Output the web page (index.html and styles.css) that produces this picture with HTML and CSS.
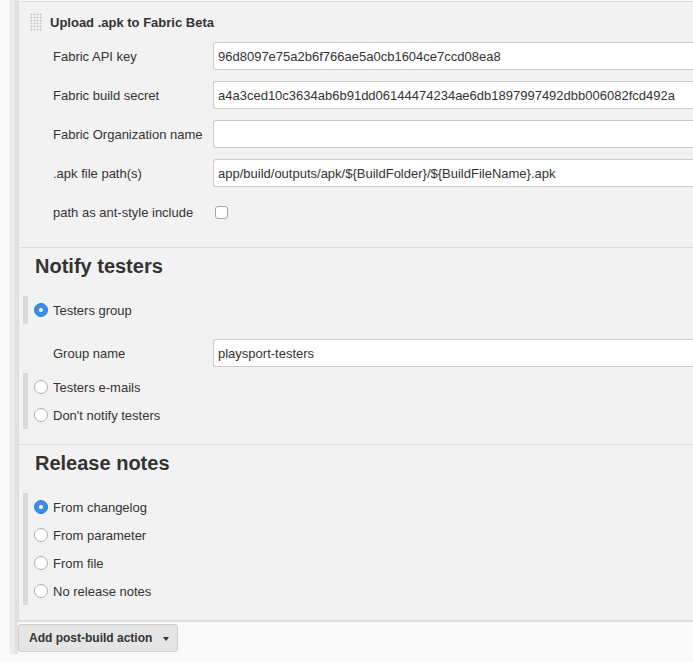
FILE: index.html
```html
<!DOCTYPE html>
<html>
<head>
<meta charset="utf-8">
<link rel="stylesheet" href="styles.css">
</head>
<body>
<div class="page">
  <div class="rail"></div>
  <div class="main">
    <div class="panel">
      <div class="hdr"><span class="handle"></span><span class="hdr-title">Upload .apk to Fabric Beta</span></div>
      <div class="rows">
        <div class="row"><span class="lbl">Fabric API key</span><input class="inp" type="text" value="96d8097e75a2b6f766ae5a0cb1604ce7ccd08ea8"></div>
        <div class="row"><span class="lbl">Fabric build secret</span><input class="inp" type="text" value="a4a3ced10c3634ab6b91dd06144474234ae6db1897997492dbb006082fcd492a"></div>
        <div class="row"><span class="lbl">Fabric Organization name</span><input class="inp" type="text" value=""></div>
        <div class="row"><span class="lbl">.apk file path(s)</span><input class="inp" type="text" value="app/build/outputs/apk/${BuildFolder}/${BuildFileName}.apk"></div>
        <div class="row"><span class="lbl">path as ant-style include</span><span class="cb"></span></div>
      </div>
      <div class="section">
        <div class="h2">Notify testers</div>
        <div class="radios first">
          <div class="radio"><span class="rb on"></span>Testers group</div>
        </div>
        <div class="row group"><span class="lbl">Group name</span><input class="inp" type="text" value="playsport-testers"></div>
        <div class="radios second">
          <div class="radio"><span class="rb"></span>Testers e-mails</div>
          <div class="radio"><span class="rb"></span>Don't notify testers</div>
        </div>
      </div>
      <div class="section last">
        <div class="h2">Release notes</div>
        <div class="radios first">
          <div class="radio"><span class="rb on"></span>From changelog</div>
          <div class="radio"><span class="rb"></span>From parameter</div>
          <div class="radio"><span class="rb"></span>From file</div>
          <div class="radio"><span class="rb"></span>No release notes</div>
        </div>
      </div>
    </div>
    <div class="actions">
      <button class="btn" type="button">Add post-build action<span class="caret"></span></button>
    </div>
  </div>
</div>
</body>
</html>
```

FILE: styles.css
```css
html, body {
  margin: 0;
  padding: 0;
  overflow: hidden;
}
body {
  background: #f9f9f9;
  font-family: "Liberation Sans", Arial, Helvetica, sans-serif;
  font-size: 13px;
  color: #333;
}
.page {
  display: flex;
  align-items: flex-start;
  padding-left: 10px;
}
.rail {
  width: 5px;
  height: 654px;
  background: #ebebeb;
  border-right: 3px solid #e2e2e2;
  flex: none;
}
.main {
  flex: 1;
  min-width: 0;
  padding-top: 1px;
  display: flex;
  flex-direction: column;
}
.panel {
  background: #f2f2f2;
  border-top: 1px solid #dcdcdc;
  border-left: 1px solid #dcdcdc;
  border-bottom: 2px solid #dedede;
  padding-bottom: 15px;
}
.hdr {
  height: 40px;
  display: flex;
  align-items: center;
  padding-left: 11px;
  gap: 8px;
}
.handle {
  width: 12px;
  height: 18px;
  background-image: radial-gradient(circle, #bdbdbd 0.8px, transparent 1.1px);
  background-size: 3px 3px;
}
.hdr-title {
  font-weight: bold;
  font-size: 13px;
}
.rows {
  display: flex;
  flex-direction: column;
  gap: 11px;
}
.row {
  display: grid;
  grid-template-columns: 160px 1fr;
  align-items: center;
  height: 28px;
  padding-left: 34px;
}
.lbl {
  font-size: 13px;
}
.inp {
  box-sizing: border-box;
  height: 28px;
  width: 100%;
  min-width: 0;
  border: 1px solid #ccc;
  border-right: none;
  border-radius: 3px 0 0 3px;
  background: #fff;
  font-family: "Liberation Sans", Arial, Helvetica, sans-serif;
  font-size: 13px;
  color: #333;
  padding: 0 4px;
  margin: 0;
  outline: none;
}
.cb {
  box-sizing: border-box;
  width: 13px;
  height: 13px;
  margin-left: 2px;
  border: 1px solid #a6a6a6;
  border-radius: 3px;
  background: #fff;
}
.section {
  border-top: 1px solid #dcdcdc;
  margin-top: 21px;
  margin-left: 1px;
  padding-top: 6px;
}
.section.last {
  margin-top: 15px;
}
.h2 {
  font-size: 20px;
  font-weight: bold;
  line-height: 24px;
  padding-left: 15px;
}
.radios {
  margin-left: 3px;
  border-left: 5px solid #dadada;
  padding-left: 6px;
  display: flex;
  flex-direction: column;
}
.radios.first {
  margin-top: 18px;
}
.radios.second {
  margin-top: 6px;
}
.row.group {
  margin-top: 15px;
  padding-left: 33px;
}
.radio {
  height: 28px;
  display: flex;
  align-items: center;
  gap: 6px;
  font-size: 13px;
  line-height: 15px;
}
.rb {
  box-sizing: border-box;
  width: 14px;
  height: 14px;
  border-radius: 50%;
  border: 1px solid #b0b0b0;
  background: #fff;
  position: relative;
  flex: none;
  margin-right: -1px;
}
.rb.on {
  background: #3b8ee8;
  border-color: #2f7fd6;
}
.rb.on::after {
  content: "";
  position: absolute;
  left: 4px;
  top: 4px;
  width: 4px;
  height: 4px;
  border-radius: 50%;
  background: #fff;
}
.actions {
  padding-top: 2px;
}
.btn {
  box-sizing: border-box;
  width: 160px;
  height: 28px;
  border: 1px solid #cfcfcf;
  border-radius: 3px;
  background: #e5e5e5;
  font-family: "Liberation Sans", Arial, Helvetica, sans-serif;
  font-weight: bold;
  font-size: 12px;
  color: #333;
  text-align: left;
  padding: 0 0 0 10px;
  display: flex;
  align-items: center;
  margin: 0;
}
.caret {
  width: 0;
  height: 0;
  border-left: 3.5px solid transparent;
  border-right: 3.5px solid transparent;
  border-top: 4px solid #333;
  margin-left: 11px;
  margin-top: 1px;
}
```
